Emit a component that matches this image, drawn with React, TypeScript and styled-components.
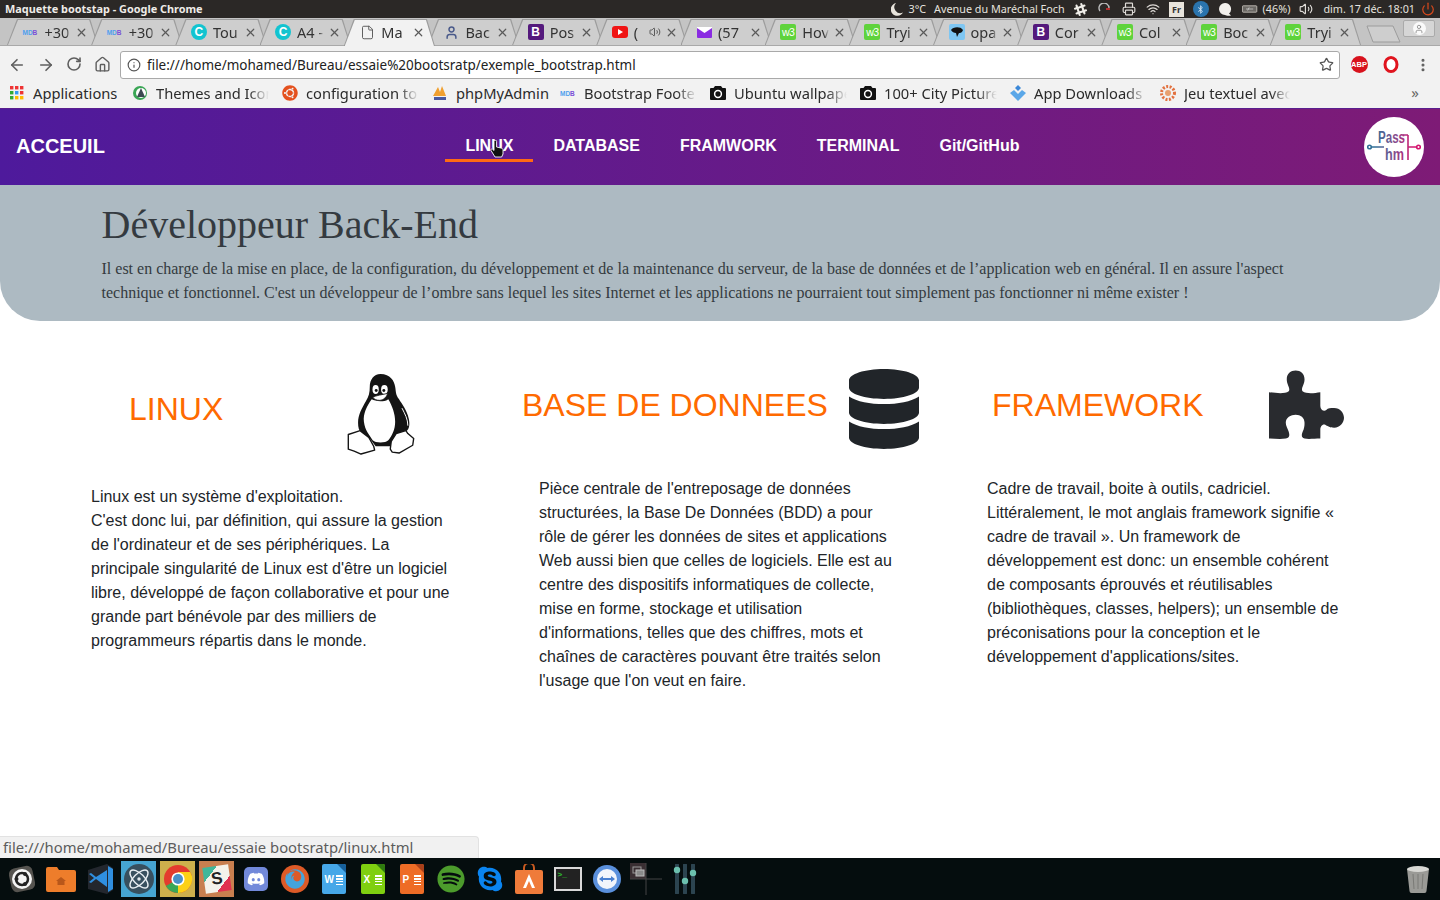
import { ReactNode } from "react";
import styled, { createGlobalStyle } from "styled-components";
import {
  ArrowLeft,
  ArrowRight,
  Atom,
  File,
  Home,
  Info,
  MoreVertical,
  Power,
  Printer,
  RotateCw,
  Star,
  User,
  Volume2,
  Wifi,
  X,
} from "lucide-react";
import {
  FaBluetoothB,
  FaDatabase,
  FaDiscord,
  FaFirefox,
  FaSkype,
  FaSlackHash,
  FaSpotify,
  FaUbuntu,
} from "react-icons/fa";

const uiFont = `"Noto Sans", "Open Sans", sans-serif`;

const GlobalStyle = createGlobalStyle`
  html, body {
    margin: 0;
    padding: 0;
    background: #fff;
  }
  * {
    box-sizing: border-box;
  }
`;

const Screen = styled.div`
  width: 1440px;
  height: 900px;
  display: flex;
  flex-direction: column;
  overflow: hidden;
  font-family: "Liberation Sans", Arial, sans-serif;
`;

/* ubuntu top bar */
const SystemBar = styled.div`
  height: 18px;
  flex: none;
  display: flex;
  align-items: center;
  background: #2b2826;
  color: #e6e3df;
  font-family: ${uiFont};
  padding: 0 4px 0 5px;
  white-space: nowrap;
`;

const WindowTitle = styled.div`
  font-weight: 700;
  font-size: 10.9px;
  color: #efece8;
  margin-right: auto;
  padding-bottom: 1px;
`;

const Tray = styled.div`
  display: flex;
  align-items: center;
  height: 18px;
`;

const TrayText = styled.span<{ $left: number }>`
  margin-left: ${(p) => p.$left}px;
  font-size: 10.8px;
  padding-bottom: 1px;
`;

const TrayIcon = styled.span<{ $left: number }>`
  margin-left: ${(p) => p.$left}px;
  display: flex;
  align-items: center;
  justify-content: center;
  width: 16px;
  height: 16px;
  color: #dfdcd8;
`;

const LangBox = styled.span`
  background: #e8e4dc;
  color: #333;
  width: 15px;
  height: 15px;
  font-size: 9px;
  font-weight: 700;
  display: flex;
  align-items: center;
  justify-content: center;
`;

const BlueDot = styled.span`
  width: 16px;
  height: 16px;
  border-radius: 50%;
  background: #2a74ae;
  display: flex;
  align-items: center;
  justify-content: center;
  color: #cfe2f2;
`;

/* chrome */
const TabStrip = styled.div`
  height: 28px;
  flex: none;
  display: flex;
  align-items: stretch;
  padding: 1px 0 0 7px;
  background: #c4c4c4;
  border-bottom: 1px solid #a9a9a9;
  position: relative;
`;

const Tab = styled.div<{ $active?: boolean }>`
  position: relative;
  isolation: isolate;
  width: 84.2px;
  flex: none;
  display: flex;
  align-items: center;
  padding: 0 3px ${(p) => (p.$active ? "1px" : "0")} 15.5px;
  gap: 6px;
  font-family: ${uiFont};
  font-size: 14.5px;
  color: #333;
  z-index: ${(p) => (p.$active ? 2 : 1)};
  margin-bottom: ${(p) => (p.$active ? "-1px" : "0")};
  &::before,
  &::after {
    content: "";
    position: absolute;
    top: 0;
    bottom: 0;
    clip-path: polygon(10px 0, calc(100% - 8px) 0, 100% 100%, 0 100%);
  }
  &::before {
    left: 0;
    right: -7px;
    background: #9c9c9c;
    z-index: -2;
  }
  &::after {
    left: 1px;
    right: -6px;
    top: 1px;
    background: ${(p) => (p.$active ? "#f2f2f2" : "#cecece")};
    z-index: -1;
  }
`;

const TabTitle = styled.span`
  flex: 1;
  min-width: 0;
  overflow: hidden;
  white-space: nowrap;
  -webkit-mask-image: linear-gradient(90deg, #000 82%, transparent);
  mask-image: linear-gradient(90deg, #000 82%, transparent);
`;

const TabClose = styled.span`
  flex: none;
  display: flex;
  margin-left: -2px;
  color: #5a5a5a;
`;

const NewTab = styled.svg`
  margin: 6px 0 0 12px;
  flex: none;
`;

const ProfileButton = styled.div`
  position: absolute;
  right: 5px;
  top: 2px;
  width: 32px;
  height: 17px;
  border: 1px solid #aaa;
  border-radius: 2px;
  background: #d6d6d6;
  display: flex;
  align-items: center;
  justify-content: center;
`;

const ProfileDisc = styled.span`
  width: 13px;
  height: 13px;
  border-radius: 50%;
  background: #fafafa;
  color: #8a8a8a;
  display: flex;
  align-items: center;
  justify-content: center;
`;

const FaviconBox = styled.span<{ $bg: string; $round?: boolean; $color?: string }>`
  width: 16px;
  height: 16px;
  flex: none;
  display: flex;
  align-items: center;
  justify-content: center;
  background: ${(p) => p.$bg};
  color: ${(p) => p.$color ?? "#fff"};
  border-radius: ${(p) => (p.$round ? "50%" : "2px")};
  font-family: "Liberation Sans", Arial, sans-serif;
  font-weight: 700;
  font-size: 12px;
  line-height: 1;
  overflow: hidden;
`;

const W3Mark = styled.span`
  font-size: 10.5px;
  font-weight: 400;
  letter-spacing: -0.5px;
`;

const MdbMark = styled.span`
  width: 16px;
  flex: none;
  font-family: "Liberation Sans", Arial, sans-serif;
  font-size: 6.5px;
  font-weight: 700;
  color: #4f9fee;
  white-space: nowrap;
  b {
    color: #7b4fd8;
  }
`;

const ToolBar = styled.div`
  height: 35px;
  flex: none;
  display: flex;
  align-items: center;
  padding-top: 2px;
  background: #f2f2f2;
  position: relative;
  z-index: 1;
`;

const NavButton = styled.span`
  width: 28.5px;
  display: flex;
  justify-content: center;
  color: #5f5f5f;
`;

const NavButtons = styled.div`
  display: flex;
  margin-left: 3px;
  width: 117px;
`;

const Omnibox = styled.div`
  width: 1220px;
  height: 28px;
  display: flex;
  align-items: center;
  background: #fff;
  border: 1px solid #a9a9a9;
  border-radius: 3px;
  padding: 0 5px 0 6px;
  font-family: ${uiFont};
  font-size: 13.5px;
  color: #222;
  gap: 6px;
`;

const UrlText = styled.span`
  flex: 1;
  white-space: nowrap;
`;

const ExtSlot = styled.span<{ $left: number }>`
  margin-left: ${(p) => p.$left}px;
  width: 20px;
  display: flex;
  justify-content: center;
  color: #5f5f5f;
`;

const AbpBadge = styled.span`
  width: 17px;
  height: 17px;
  border-radius: 50%;
  background: #d8121d;
  color: #fff;
  font-size: 7.5px;
  font-weight: 700;
  display: flex;
  align-items: center;
  justify-content: center;
`;

const BookmarkBar = styled.div`
  height: 27px;
  flex: none;
  display: flex;
  align-items: center;
  background: #f2f2f2;
  padding: 0 0 3px 9px;
  font-family: ${uiFont};
  font-size: 14.7px;
  color: #2b2b2b;
  position: relative;
`;

const Bookmark = styled.div<{ $width: number }>`
  width: ${(p) => p.$width}px;
  flex: none;
  display: flex;
  align-items: center;
  gap: 8px;
  white-space: nowrap;
`;

const BookmarkLabel = styled.span<{ $fade?: boolean }>`
  width: ${(p) => (p.$fade ? "113px" : "auto")};
  overflow: hidden;
  ${(p) =>
    p.$fade
      ? `-webkit-mask-image: linear-gradient(90deg, #000 82%, transparent);
         mask-image: linear-gradient(90deg, #000 82%, transparent);`
      : ""}
`;

const BookmarkIconSlot = styled.span`
  width: 16px;
  height: 16px;
  flex: none;
  display: flex;
  align-items: center;
  justify-content: center;
  color: #111;
`;

const MoreBookmarks = styled.span`
  position: absolute;
  right: 21px;
  top: 1px;
  font-size: 15px;
  color: #666;
`;

/* the page in the browser */
const Page = styled.main`
  flex: 1;
  min-height: 0;
  position: relative;
  background: #fff;
`;

const NavBar = styled.nav`
  height: 77px;
  display: flex;
  align-items: center;
  padding: 0 16px;
  background: linear-gradient(90deg, #4e1a9c 0%, #7e1b76 100%);
  border-top: 1px solid #5a1f8f;
  position: relative;
`;

const Brand = styled.a`
  color: #fff;
  font-weight: 700;
  font-size: 20px;
  width: 89px;
  margin: 0 340px 2px 0;
`;

const NavList = styled.div`
  display: flex;
  height: 100%;
  align-items: center;
  padding-left: 0.4px;
`;

const NavItem = styled.a<{ $current?: boolean }>`
  color: #fff;
  font-weight: 700;
  font-size: 16px;
  line-height: 24px;
  padding: 1px 20px 0;
  height: 29px;
  border-bottom: 3px solid ${(p) => (p.$current ? "#ff6a13" : "transparent")};
`;

const LogoDisc = styled.div`
  width: 60px;
  height: 60px;
  margin-left: auto;
  border-radius: 50%;
  background: #fff;
  display: flex;
  align-items: center;
  justify-content: center;
`;

const Pointer = styled.svg`
  position: absolute;
  left: 490px;
  top: 31px;
`;

const Hero = styled.header`
  height: 136px;
  background: #adbac2;
  border-radius: 0 0 40px 40px;
  padding: 16px 0 0 101.5px;
  font-family: "Liberation Serif", "Times New Roman", serif;
  color: #343a40;
`;

const HeroTitle = styled.h1`
  margin: 0 0 8px;
  font-weight: 400;
  font-size: 40px;
  line-height: 48px;
`;

const HeroText = styled.p`
  margin: 0;
  width: 1200px;
  font-size: 16px;
  line-height: 24px;
`;

const Topics = styled.section`
  display: grid;
  grid-template-columns: repeat(3, 448px);
  padding-left: 91px;
`;

const Topic = styled.article``;

const TopicHead = styled.div<{ $inset: number; $gap: number; $top: number; $height: number }>`
  display: flex;
  align-items: center;
  height: ${(p) => p.$height}px;
  margin-top: ${(p) => p.$top}px;
  margin-left: ${(p) => p.$inset}px;
  gap: ${(p) => p.$gap}px;
  color: #212529;
`;

const TopicTitle = styled.h2<{ $lift?: number }>`
  margin: 0 0 ${(p) => p.$lift ?? 0}px;
  font-weight: 400;
  font-size: 32px;
  line-height: 38px;
  color: #ff6a00;
  white-space: nowrap;
`;

const TopicText = styled.p<{ $top: number }>`
  margin: ${(p) => p.$top}px 0 0;
  width: 362px;
  font-size: 16px;
  line-height: 24px;
  color: #212529;
`;

const DatabaseIcon = styled(FaDatabase)`
  width: 70px;
  height: 80px;
  flex: none;
`;

const StatusBubble = styled.div`
  position: absolute;
  left: 0;
  bottom: 0;
  width: 479px;
  height: 22px;
  background: #f1f1f1;
  border: 1px solid #e2e2e2;
  border-left: 0;
  border-bottom: 0;
  border-top-right-radius: 4px;
  padding-left: 3px;
  font-family: ${uiFont};
  font-size: 14.8px;
  line-height: 21px;
  color: #5c5c5c;
  white-space: nowrap;
`;

/* launcher */
const Dock = styled.footer`
  height: 42px;
  flex: none;
  display: flex;
  align-items: center;
  background: #050d0e;
  padding-left: 2px;
`;

const DockSlot = styled.div<{ $tint?: string }>`
  width: 39px;
  height: 36px;
  flex: none;
  display: flex;
  align-items: center;
  justify-content: center;
  position: relative;
  &::before {
    content: "";
    position: absolute;
    top: 0;
    bottom: 0;
    left: 2px;
    right: 2px;
    background: ${(p) => p.$tint ?? "transparent"};
  }
  > * {
    position: relative;
  }
`;

const DockTrash = styled(DockSlot)`
  margin-left: auto;
  margin-right: 3px;
`;

const AtomDisc = styled.span`
  width: 30px;
  height: 30px;
  border-radius: 50%;
  background: #38505f;
  color: #e8eef2;
  display: flex;
  align-items: center;
  justify-content: center;
`;

const SlackSheet = styled.span`
  width: 26px;
  height: 26px;
  background: linear-gradient(135deg, #3fb79a 0 28%, #f4f2ea 28% 72%, #e0314f 72%);
  color: #222;
  font-size: 17px;
  font-weight: 700;
  display: flex;
  align-items: center;
  justify-content: center;
  transform: rotate(-8deg);
`;

const DiscordTile = styled.span`
  width: 24px;
  height: 24px;
  border-radius: 5px;
  background: #7289da;
  color: #fff;
  display: flex;
  align-items: center;
  justify-content: center;
`;

const FirefoxDisc = styled.span`
  width: 28px;
  height: 28px;
  border-radius: 50%;
  background: #dd5a27;
  color: #45a4dd;
  display: flex;
  align-items: center;
  justify-content: center;
`;

const OfficeDoc = styled.span<{ $bg: string; $corner: string }>`
  position: relative;
  width: 24px;
  height: 30px;
  border-radius: 2px;
  background: ${(p) => p.$bg};
  color: #fff;
  font-size: 10px;
  font-weight: 700;
  display: flex;
  align-items: center;
  justify-content: flex-start;
  padding-left: 3px;
  overflow: hidden;
  &::before {
    content: "";
    position: absolute;
    top: 0;
    right: 0;
    border-top: 9px solid ${(p) => p.$corner};
    border-left: 9px solid transparent;
  }
  &::after {
    content: "";
    position: absolute;
    right: 3px;
    top: 11px;
    width: 7px;
    height: 10px;
    background: repeating-linear-gradient(#fff 0 1.5px, transparent 1.5px 3px);
  }
`;

const TerminalTile = styled.span`
  width: 28px;
  height: 24px;
  border: 2px solid #d8d8d8;
  background: #222;
  color: #2fbf2f;
  font-family: "Liberation Mono", monospace;
  font-size: 8px;
  font-weight: 700;
  line-height: 12px;
  padding-left: 2px;
`;

const Fav = ({ kind }: { kind: string }) => {
  switch (kind) {
    case "mdb":
      return (
        <MdbMark>
          MD<b>B</b>
        </MdbMark>
      );
    case "canva":
      return (
        <FaviconBox $bg="#12c4d0" $round>
          C
        </FaviconBox>
      );
    case "file":
      return (
        <FaviconBox $bg="transparent" $color="#555">
          <File size={15} strokeWidth={1.5} />
        </FaviconBox>
      );
    case "dev":
      return (
        <FaviconBox $bg="transparent" $color="#4a5a8a">
          <User size={15} strokeWidth={2.4} />
        </FaviconBox>
      );
    case "boot":
      return <FaviconBox $bg="#54197c">B</FaviconBox>;
    case "yt":
      return (
        <FaviconBox $bg="transparent">
          <svg width="16" height="12" viewBox="0 0 16 12">
            <rect width="16" height="12" rx="3" fill="#f01414" />
            <path d="M6 3l5 3-5 3z" fill="#fff" />
          </svg>
        </FaviconBox>
      );
    case "mail":
      return (
        <FaviconBox $bg="transparent">
          <svg width="15" height="11" viewBox="0 0 15 11">
            <rect width="15" height="11" rx="1" fill="#8a2be2" />
            <path d="M0 1l7.5 5L15 1V0H0z" fill="#fff" />
          </svg>
        </FaviconBox>
      );
    case "w3":
      return (
        <FaviconBox $bg="#5fd33c">
          <W3Mark>w3</W3Mark>
        </FaviconBox>
      );
    default:
      return (
        <FaviconBox $bg="#7ec6f2" $color="#123">
          <svg width="12" height="10" viewBox="0 0 12 10">
            <path d="M0 3c2-3 9-4 12 0-1 3-3 3-4 3l-2 4-1-4C3 6 1 5 0 3z" fill="#111" />
          </svg>
        </FaviconBox>
      );
  }
};

const tabs = [
  { fav: "mdb", title: "+30" },
  { fav: "mdb", title: "+30" },
  { fav: "canva", title: "Tou" },
  { fav: "canva", title: "A4 -" },
  { fav: "file", title: "Ma", active: true },
  { fav: "dev", title: "Bac" },
  { fav: "boot", title: "Pos" },
  { fav: "yt", title: "(", sound: true },
  { fav: "mail", title: "(57" },
  { fav: "w3", title: "Hov" },
  { fav: "w3", title: "Tryi" },
  { fav: "dark", title: "opa" },
  { fav: "boot", title: "Cor" },
  { fav: "w3", title: "Col" },
  { fav: "w3", title: "Boc" },
  { fav: "w3", title: "Tryi" },
];

const CameraMark = () => (
  <svg width="16" height="14" viewBox="0 0 16 14">
    <path d="M5 0h6l1.5 2H15a1 1 0 0 1 1 1v10a1 1 0 0 1-1 1H1a1 1 0 0 1-1-1V3a1 1 0 0 1 1-1h2.5z" fill="#111" />
    <circle cx="8" cy="8" r="3.4" fill="none" stroke="#fff" strokeWidth="1.5" />
  </svg>
);

const AppsGrid = () => (
  <svg width="14" height="14" viewBox="0 0 14 14">
    {["#e33", "#e33", "#e33", "#3a3", "#39e", "#e33", "#3a3", "#fb0", "#fb0"].map((c, i) => (
      <rect key={i} x={(i % 3) * 5} y={Math.floor(i / 3) * 5} width="3.4" height="3.4" fill={c} />
    ))}
  </svg>
);

const bookmarks: { width: number; icon: ReactNode; label: string; fade?: boolean }[] = [
  { width: 123, icon: <AppsGrid />, label: "Applications" },
  {
    width: 150,
    icon: (
      <svg width="16" height="16" viewBox="0 0 16 16">
        <circle cx="8" cy="8" r="7" fill="#3aa655" />
        <circle cx="9" cy="8" r="5" fill="#fff" />
        <path d="M9 3l4 9H5z" fill="#3c4a52" />
      </svg>
    ),
    label: "Themes and Icon",
    fade: true,
  },
  { width: 150, icon: <FaUbuntu size={16} color="#e4511e" />, label: "configuration to", fade: true },
  {
    width: 128,
    icon: (
      <svg width="16" height="16" viewBox="0 0 16 16">
        <path d="M1 11L6 2l2 5 2-6 4 10z" fill="#f0a030" />
        <rect x="2" y="12" width="12" height="3" fill="#4a5aa0" />
      </svg>
    ),
    label: "phpMyAdmin",
  },
  { width: 150, icon: <Fav kind="mdb" />, label: "Bootstrap Foote", fade: true },
  { width: 150, icon: <CameraMark />, label: "Ubuntu wallpape", fade: true },
  { width: 150, icon: <CameraMark />, label: "100+ City Picture", fade: true },
  {
    width: 150,
    icon: (
      <svg width="16" height="16" viewBox="0 0 16 16">
        <path d="M0 8l4-3 4 4 4-4 4 3-8 8z" fill="#5aa7e8" />
        <path d="M5 3l3-3 3 3-3 3z" fill="#3b88d8" />
      </svg>
    ),
    label: "App Downloads",
    fade: true,
  },
  {
    width: 130,
    icon: (
      <svg width="16" height="16" viewBox="0 0 16 16">
        <circle cx="8" cy="8" r="6.5" fill="none" stroke="#e2713f" strokeWidth="3" strokeDasharray="2 1.5" />
        <circle cx="8" cy="8" r="3" fill="#e8a070" />
      </svg>
    ),
    label: "Jeu textuel avec",
    fade: true,
  },
];

const PassLogo = () => (
  <svg width="54" height="38" viewBox="0 0 54 38" fill="none">
    <defs>
      <linearGradient id="logoInk" gradientUnits="userSpaceOnUse" x1="8" y1="0" x2="46" y2="0">
        <stop offset="0" stopColor="#2f6f96" />
        <stop offset="0.5" stopColor="#80508f" />
        <stop offset="1" stopColor="#d4146e" />
      </linearGradient>
    </defs>
    <g stroke="url(#logoInk)" strokeWidth="1.6">
      <circle cx="2.5" cy="19" r="1.8" />
      <circle cx="51.5" cy="19" r="1.8" />
      <path d="M4.500 19H17M41 19h8.500M41 7v25M36 7h5" />
    </g>
    <text
      x="11"
      y="15"
      fontFamily="Liberation Sans"
      fontWeight="700"
      fontSize="16"
      fill="url(#logoInk)"
      textLength="27"
      lengthAdjust="spacingAndGlyphs"
    >
      Pass
    </text>
    <text
      x="18"
      y="32"
      fontFamily="Liberation Sans"
      fontWeight="700"
      fontSize="16"
      fill="url(#logoInk)"
      textLength="19"
      lengthAdjust="spacingAndGlyphs"
    >
      hm
    </text>
  </svg>
);

const TuxIcon = () => (
  <svg width="70" height="82" viewBox="15 12 71 84">
    <path
      d="M50 13c-7 0-11 6-11 13 0 6-1 10-4 15-4 7-8 14-8 22 0 5 1 8 3 10l9 6 6 8h16l5-7 10-8c4-3 4-8 3-13-2-9-7-15-10-20-4-6-3-8-4-13-1-6-5-13-15-13z"
      fill="#141414"
    />
    <path
      d="M50 41c-4 0-7-1-9-2-5 7-9 15-8 23 1 9 6 14 9 19 3 3 13 3 16 0 4-5 7-11 7-19 0-8-3-16-7-23-3 2-5 2-8 2z"
      fill="#fff"
    />
    <ellipse cx="45" cy="29" rx="3.2" ry="4.6" fill="#fff" />
    <ellipse cx="54" cy="29" rx="3.4" ry="4.6" fill="#fff" />
    <circle cx="45.6" cy="30" r="1.5" fill="#141414" />
    <circle cx="53.4" cy="30" r="1.5" fill="#141414" />
    <path d="M42 37c3-2 11-3 15-4 0 3-4 7-8 7-3 0-5-1-7-3z" fill="#fff" stroke="#141414" strokeWidth="0.8" />
    <path d="M72 48c3 6 6 11 6 18" stroke="#fff" strokeWidth="1" fill="none" />
    <path
      d="M17 75l9-3 3-1 9 7 5 9 1 4-14 4-7-3-6-2v-8z"
      fill="#fff"
      stroke="#141414"
      strokeWidth="1.4"
      strokeLinejoin="round"
    />
    <path
      d="M60 90l1-8 5-8 10-3 2 3 6 5-1 7-14 8-7-1z"
      fill="#fff"
      stroke="#141414"
      strokeWidth="1.4"
      strokeLinejoin="round"
    />
  </svg>
);

const PuzzleIcon = () => (
  <svg width="75" height="70" viewBox="0 0 76 70">
    <path
      d="M0 22C8 23 16 24 20 21C22 18 18 15 18 9C18 3 22 0 27 0C32 0 36 3 36 9C36 15 32 18 34 21C38 24 46 23 52 22L52 36C52 40 56 42 58 40C60 38 62 38 66 38C72 38 76 43 76 48C76 53 72 58 66 58C61 58 59 56 57 55C54 54 52 57 52 60L52 69C46 69 40 70 36 69C32 68 33 64 35 60C36 57 36 55 36 53C36 48 32 45 27 45C22 45 17 48 17 53C17 56 19 59 20 62C21 66 21 68 17 69C11 70 5 69 0 69Z"
      fill="#292b2f"
    />
  </svg>
);

const ChromeMark = () => (
  <svg width="30" height="30" viewBox="0 0 30 30">
    <circle cx="15" cy="15" r="14" fill="#e33b2e" />
    <path d="M15 15L2.9 22A14 14 0 0 0 15 29c1 0 2-.1 3-.3z" fill="#3aa757" />
    <path d="M15 8h12.2A14 14 0 0 1 15 29z" fill="#fcd116" />
    <circle cx="15" cy="15" r="6.6" fill="#fff" />
    <circle cx="15" cy="15" r="5" fill="#4a90c8" />
  </svg>
);

const dockItems: { tint?: string; icon: ReactNode }[] = [
  {
    icon: (
      <svg width="30" height="30" viewBox="0 0 30 30">
        <rect x="3" y="3" width="24" height="24" rx="6" fill="#55534f" transform="rotate(-12 15 15)" />
        <circle cx="15" cy="15" r="10" fill="#f4f4f4" />
        <circle cx="15" cy="15" r="6" fill="none" stroke="#222" strokeWidth="2.5" />
        <circle cx="9.5" cy="15" r="2" fill="#222" />
        <circle cx="18" cy="10" r="2" fill="#222" />
        <circle cx="18" cy="20" r="2" fill="#222" />
      </svg>
    ),
  },
  {
    icon: (
      <svg width="30" height="26" viewBox="0 0 30 26">
        <path d="M0 3a2 2 0 0 1 2-2h9l2 3h15a2 2 0 0 1 2 2v18a2 2 0 0 1-2 2H2a2 2 0 0 1-2-2z" fill="#ee7d2b" />
        <path d="M15 11l-5 4h1.5v4h7v-4H20z" fill="#b8571a" />
      </svg>
    ),
  },
  {
    icon: (
      <svg width="28" height="30" viewBox="0 0 28 30">
        <path d="M2 6l19-6 6 4v22l-6 4-19-5z" fill="#23272e" />
        <path d="M21 6v17L10 15l-5 4-2-1 5-4-5-4 2-1 5 4zM22 2l5 3v20l-5 3z" fill="#2f8fe0" />
      </svg>
    ),
  },
  {
    tint: "#46a5d2",
    icon: (
      <AtomDisc>
        <Atom size={24} strokeWidth={1.4} />
      </AtomDisc>
    ),
  },
  { tint: "#cdb04c", icon: <ChromeMark /> },
  {
    tint: "#c87f4f",
    icon: <SlackSheet>S</SlackSheet>,
  },
  {
    icon: (
      <DiscordTile>
        <FaDiscord size={18} />
      </DiscordTile>
    ),
  },
  {
    icon: (
      <FirefoxDisc>
        <FaFirefox size={20} />
      </FirefoxDisc>
    ),
  },
  { icon: <OfficeDoc $bg="#46a7e8" $corner="#17609a">W</OfficeDoc> },
  { icon: <OfficeDoc $bg="#7fcf10" $corner="#2f7a10">X</OfficeDoc> },
  { icon: <OfficeDoc $bg="#ee6c26" $corner="#a8401a">P</OfficeDoc> },
  { icon: <FaSpotify size={28} color="#4c9b2c" /> },
  { icon: <FaSkype size={28} color="#0a84f0" /> },
  {
    icon: (
      <svg width="28" height="30" viewBox="0 0 28 30">
        <path d="M9 7V4a5 5 0 0 1 10 0v3" stroke="#c85a20" strokeWidth="2" fill="none" />
        <rect y="6" width="28" height="24" rx="2" fill="#ef7b3a" />
        <path d="M14 10l6 14h-3l-3-7-3 7H8z" fill="#fff" />
      </svg>
    ),
  },
  { icon: <TerminalTile>&gt;_</TerminalTile> },
  {
    icon: (
      <svg width="28" height="28" viewBox="0 0 28 28">
        <circle cx="14" cy="14" r="14" fill="#5a90dc" />
        <circle cx="14" cy="14" r="10" fill="#f2f5fb" />
        <path d="M6 14l4-3v2h8v-2l4 3-4 3v-2h-8v2z" fill="#4a80d0" />
      </svg>
    ),
  },
  {
    icon: (
      <svg width="32" height="32" viewBox="0 0 32 32">
        <rect width="16" height="16" fill="#3a2f33" />
        <path d="M16 0v32M0 16h32" stroke="#444" strokeWidth="1" />
        <rect x="3" y="4" width="8" height="6" fill="none" stroke="#9a9a9a" />
        <rect x="6" y="7" width="8" height="6" fill="#8a8a8a" stroke="#bbb" />
      </svg>
    ),
  },
  {
    icon: (
      <svg width="24" height="30" viewBox="0 0 24 30">
        <path d="M4 1v28M12 1v28M20 1v28" stroke="#2c4450" strokeWidth="4" strokeLinecap="round" />
        <circle cx="4" cy="6" r="3.2" fill="#6cc0ae" />
        <circle cx="12" cy="17" r="3.2" fill="#6cc0ae" />
        <circle cx="20" cy="9" r="3.2" fill="#6cc0ae" />
      </svg>
    ),
  },
];

export default function App() {
  return (
    <Screen>
      <GlobalStyle />
      <SystemBar>
        <WindowTitle>Maquette bootstap - Google Chrome</WindowTitle>
        <Tray>
          <TrayIcon $left={0}>
            <svg width="12" height="13" viewBox="0 0 12 13">
              <path d="M5 0a6.5 6.5 0 1 0 7 9.5A6 6 0 0 1 5 0z" fill="#e8e4dc" />
            </svg>
          </TrayIcon>
          <TrayText $left={3}>3°C</TrayText>
          <TrayText $left={8}>Avenue du Maréchal Foch</TrayText>
          <TrayIcon $left={8}>
            <FaSlackHash size={15} color="#f0eee9" />
          </TrayIcon>
          <TrayIcon $left={8}>
            <svg width="13" height="13" viewBox="0 0 13 13" fill="none">
              <path d="M2 8a5 5 0 1 1 9-3" stroke="#bbb" strokeWidth="1.4" />
              <path d="M8 6h4" stroke="#e33" strokeWidth="1.4" />
            </svg>
          </TrayIcon>
          <TrayIcon $left={8}>
            <Printer size={14} />
          </TrayIcon>
          <TrayIcon $left={8}>
            <Wifi size={14} />
          </TrayIcon>
          <TrayIcon $left={8}>
            <LangBox>Fr</LangBox>
          </TrayIcon>
          <TrayIcon $left={8}>
            <BlueDot>
              <FaBluetoothB size={9} />
            </BlueDot>
          </TrayIcon>
          <TrayIcon $left={8}>
            <svg width="14" height="13" viewBox="0 0 14 13">
              <path d="M7 0a6 6 0 0 1 4 10.5l2 2c-3 .5-5 0-6-.5A6 6 0 0 1 7 0z" fill="#f2f0ec" />
            </svg>
          </TrayIcon>
          <TrayIcon $left={9}>
            <svg width="20" height="10" viewBox="0 0 20 10">
              <rect x="0.5" y="1" width="18" height="8" rx="1" fill="#6b6864" stroke="#cfcac4" />
              <path d="M5 5h9M9 3l-2 4" stroke="#ddd" strokeWidth="0.8" />
            </svg>
          </TrayIcon>
          <TrayText $left={5}>(46%)</TrayText>
          <TrayIcon $left={8}>
            <Volume2 size={14} />
          </TrayIcon>
          <TrayText $left={9}>dim. 17 déc. 18:01</TrayText>
          <TrayIcon $left={5}>
            <Power size={14} color="#dc4a1c" />
          </TrayIcon>
        </Tray>
      </SystemBar>

      <TabStrip>
        {tabs.map((tab, i) => (
          <Tab key={i} $active={tab.active}>
            <Fav kind={tab.fav} />
            <TabTitle>{tab.title}</TabTitle>
            {tab.sound && (
              <TabClose>
                <Volume2 size={12} />
              </TabClose>
            )}
            <TabClose>
              <X size={13} strokeWidth={2.2} />
            </TabClose>
          </Tab>
        ))}
        <NewTab width="36" height="19" viewBox="0 0 36 19">
          <path d="M1 1h26l7 16H7z" fill="#cecece" stroke="#9c9c9c" strokeLinejoin="round" />
        </NewTab>
        <ProfileButton>
          <ProfileDisc>
            <User size={10} />
          </ProfileDisc>
        </ProfileButton>
      </TabStrip>

      <ToolBar>
        <NavButtons>
          <NavButton>
            <ArrowLeft size={18} strokeWidth={2.2} />
          </NavButton>
          <NavButton>
            <ArrowRight size={18} strokeWidth={2.2} />
          </NavButton>
          <NavButton>
            <RotateCw size={16} strokeWidth={2.4} />
          </NavButton>
          <NavButton>
            <Home size={17} strokeWidth={2} />
          </NavButton>
        </NavButtons>
        <Omnibox>
          <Info size={14} color="#555" />
          <UrlText>file:///home/mohamed/Bureau/essaie%20bootsratp/exemple_bootstrap.html</UrlText>
          <Star size={15} color="#555" strokeWidth={2} />
        </Omnibox>
        <ExtSlot $left={9}>
          <AbpBadge>ABP</AbpBadge>
        </ExtSlot>
        <ExtSlot $left={12}>
          <svg width="16" height="17" viewBox="0 0 16 17">
            <ellipse cx="8" cy="8.5" rx="6" ry="7" fill="#fff" stroke="#e0141e" strokeWidth="3" />
          </svg>
        </ExtSlot>
        <ExtSlot $left={12}>
          <MoreVertical size={16} strokeWidth={2.6} />
        </ExtSlot>
      </ToolBar>

      <BookmarkBar>
        {bookmarks.map((b) => (
          <Bookmark key={b.label} $width={b.width}>
            <BookmarkIconSlot>{b.icon}</BookmarkIconSlot>
            <BookmarkLabel $fade={b.fade}>{b.label}</BookmarkLabel>
          </Bookmark>
        ))}
        <MoreBookmarks>»</MoreBookmarks>
      </BookmarkBar>

      <Page>
        <NavBar>
          <Brand>ACCEUIL</Brand>
          <NavList>
            <NavItem $current>LINUX</NavItem>
            <NavItem>DATABASE</NavItem>
            <NavItem>FRAMWORK</NavItem>
            <NavItem>TERMINAL</NavItem>
            <NavItem>Git/GitHub</NavItem>
          </NavList>
          <LogoDisc>
            <PassLogo />
          </LogoDisc>
          <Pointer width="14" height="18" viewBox="0 0 14 18">
            <path
              d="M4 1.5a1.3 1.3 0 0 1 2.6 0V7l5 1.2c1 .3 1.4 1 1.4 2V14l-1.4 3H5L1 10.5c-.6-1 .6-2 1.5-1.3L4 10.5z"
              fill="#111"
              stroke="#fff"
              strokeWidth="0.9"
            />
          </Pointer>
        </NavBar>

        <Hero>
          <HeroTitle>Développeur Back-End</HeroTitle>
          <HeroText>
            Il est en charge de la mise en place, de la configuration, du développement et de la
            maintenance du serveur, de la base de données et de l’application web en général. Il en
            assure l'aspect technique et fonctionnel. C'est un développeur de l’ombre sans lequel
            les sites Internet et les applications ne pourraient tout simplement pas fonctionner ni
            même exister !
          </HeroText>
        </Hero>

        <Topics>
          <Topic>
            <TopicHead $inset={38} $gap={123} $top={52} $height={82}>
              <TopicTitle $lift={10}>LINUX</TopicTitle>
              <TuxIcon />
            </TopicHead>
            <TopicText $top={30}>
              Linux est un système d'exploitation.
              <br />
              C'est donc lui, par définition, qui assure la gestion de l'ordinateur et de ses
              périphériques. La principale singularité de Linux est d'être un logiciel libre,
              développé de façon collaborative et pour une grande part bénévole par des milliers de
              programmeurs répartis dans le monde.
            </TopicText>
          </Topic>
          <Topic>
            <TopicHead $inset={-17} $gap={21} $top={48} $height={80}>
              <TopicTitle $lift={8}>BASE DE DONNEES</TopicTitle>
              <DatabaseIcon />
            </TopicHead>
            <TopicText $top={28}>
              Pièce centrale de l'entreposage de données structurées, la Base De Données (BDD) a
              pour rôle de gérer les données de sites et applications Web aussi bien que celles de
              logiciels. Elle est au centre des dispositifs informatiques de collecte, mise en
              forme, stockage et utilisation d'informations, telles que des chiffres, mots et
              chaînes de caractères pouvant être traités selon l'usage que l'on veut en faire.
            </TopicText>
          </Topic>
          <Topic>
            <TopicHead $inset={5} $gap={65} $top={49} $height={70}>
              <TopicTitle>FRAMEWORK</TopicTitle>
              <PuzzleIcon />
            </TopicHead>
            <TopicText $top={37}>
              Cadre de travail, boite à outils, cadriciel.
              <br />
              Littéralement, le mot anglais framework signifie « cadre de travail ». Un framework de
              développement est donc: un ensemble cohérent de composants éprouvés et réutilisables
              (bibliothèques, classes, helpers); un ensemble de préconisations pour la conception et
              le développement d'applications/sites.
            </TopicText>
          </Topic>
        </Topics>

        <StatusBubble>file:///home/mohamed/Bureau/essaie bootsratp/linux.html</StatusBubble>
      </Page>

      <Dock>
        {dockItems.map((item, i) => (
          <DockSlot key={i} $tint={item.tint}>
            {item.icon}
          </DockSlot>
        ))}
        <DockTrash>
          <svg width="24" height="28" viewBox="0 0 24 28">
            <path d="M1 4h22l-2.5 22a2 2 0 0 1-2 2h-13a2 2 0 0 1-2-2z" fill="#9a9a96" />
            <ellipse cx="12" cy="4" rx="11" ry="3" fill="#d8d8d4" />
            <path d="M7 9l1 15M12 9v15M17 9l-1 15" stroke="#7a7a76" />
          </svg>
        </DockTrash>
      </Dock>
    </Screen>
  );
}
